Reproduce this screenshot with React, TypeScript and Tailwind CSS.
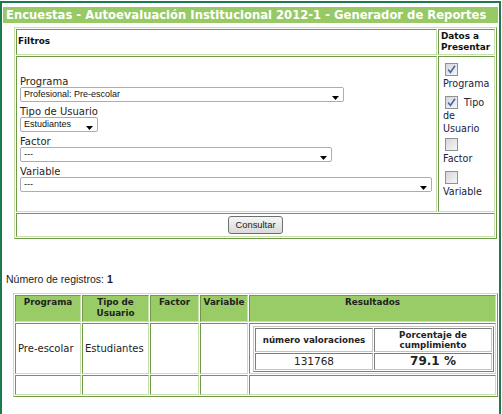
import React from "react";

// --- shared class strings ---
const dv = "font-['DejaVu_Sans',Verdana,sans-serif]";
const ar = "font-['Liberation_Sans',Arial,sans-serif]";
const tableG =
  "border border-t-[#c9dfb1] border-l-[#c9dfb1] border-r-[#6f9a45] border-b-[#6f9a45]";
const cellG =
  "border border-t-[#6f9a45] border-l-[#6f9a45] border-r-[#c9dfb1] border-b-[#c9dfb1]";
const tableGray =
  "border border-t-[#c4c4c4] border-l-[#c4c4c4] border-r-[#7d7d7d] border-b-[#7d7d7d]";
const cellGray =
  "border border-t-[#7d7d7d] border-l-[#7d7d7d] border-r-[#c4c4c4] border-b-[#c4c4c4]";

// --- fake select box ---
function FakeSelect({ width, text }: { width: string; text: string }) {
  return (
    <div
      className={`relative h-[15px] ${width} border border-[#a9aeb3] rounded-[2px] bg-white pl-[3px] ${ar} text-[9px] leading-[13px] text-[#111]`}
    >
      {text}
      <svg
        className="absolute right-[4px] bottom-[1px]"
        width="7"
        height="4"
        viewBox="0 0 7 4"
      >
        <polygon points="0,0 7,0 3.5,4" fill="#000" />
      </svg>
    </div>
  );
}

// --- fake checkbox ---
function Check({ on }: { on?: boolean }) {
  return (
    <div className="w-[13px] h-[13px] shrink-0 border border-[#8f9194] bg-linear-to-br from-[#d6d7d9] to-[#f5f6f7] flex items-center justify-center">
      {on && (
        <svg width="11" height="11" viewBox="0 0 11 11">
          <path
            d="M2.2 5.6 L4.4 8.4 L9 1.8"
            fill="none"
            stroke="#4a64a8"
            strokeWidth="1.6"
          />
        </svg>
      )}
    </div>
  );
}

export default function App() {
  return (
    <div className="w-[502px] h-[414px] overflow-hidden bg-white">
      <div className="mt-px w-[501px] h-[440px] border-2 border-[#1b7a4e] px-px pt-[4px]">
        {/* title bar */}
        <div
          className={`h-[16px] bg-[#97c965] pl-[3px] ${dv} font-bold text-[11.6px] leading-[16px] text-white whitespace-nowrap`}
        >
          Encuestas - Autoevaluación Institucional 2012-1 - Generador de Reportes
        </div>

        {/* filter form */}
        <table
          className={`mt-[4px] ml-[11px] w-[483px] table-fixed border-separate border-spacing-[1px] ${tableG}`}
        >
          <tbody>
            <tr>
              <td
                className={`w-[421px] h-[26px] ${cellG} pl-[1px] align-middle ${dv} font-bold text-[8.9px] text-[#111]`}
              >
                Filtros
              </td>
              <td
                className={`w-[57px] h-[26px] ${cellG} pl-[2px] align-middle ${dv} font-bold text-[8.9px] leading-[11.5px] text-[#111]`}
              >
                Datos a Presentar
              </td>
            </tr>
            <tr>
              <td
                className={`h-[156px] ${cellG} align-top pl-[3px] pt-[19px] ${dv} text-[10px] text-[#2a2320]`}
              >
                <div className="leading-[11px]">Programa</div>
                <FakeSelect width="w-[324px]" text="Profesional: Pre-escolar" />
                <div className="mt-[4px] leading-[11px]">Tipo de Usuario</div>
                <FakeSelect width="w-[78px]" text="Estudiantes" />
                <div className="mt-[4px] leading-[11px]">Factor</div>
                <FakeSelect width="w-[312px]" text="---" />
                <div className="mt-[4px] leading-[11px]">Variable</div>
                <FakeSelect width="w-[412px]" text="---" />
              </td>
              <td
                className={`${cellG} align-top pl-[4px] pt-[6px] ${dv} text-[9.6px] leading-[13px] text-[#22223a]`}
              >
                <div className="ml-[2px] mb-px">
                  <Check on />
                </div>
                <div>Programa</div>
                <div className="mt-[6px] flex">
                  <div className="ml-[2px]">
                    <Check on />
                  </div>
                  <span className="ml-[6px]">Tipo</span>
                </div>
                <div>de</div>
                <div>Usuario</div>
                <div className="mt-[3px] ml-[2px] mb-px">
                  <Check />
                </div>
                <div>Factor</div>
                <div className="mt-[6px] ml-[2px] mb-px">
                  <Check />
                </div>
                <div>Variable</div>
              </td>
            </tr>
            <tr>
              <td colSpan={2} className={`h-[24px] ${cellG} align-middle`}>
                <div className="flex justify-center">
                  <button
                    className={`w-[55px] h-[18px] border border-[#707070] rounded-[3px] bg-linear-to-b from-[#f6f6f6] to-[#d9d9d9] ${ar} text-[9.4px] leading-[16px] text-[#1a1a1a]`}
                  >
                    Consultar
                  </button>
                </div>
              </td>
            </tr>
          </tbody>
        </table>

        {/* results */}
        <div
          className={`mt-[34px] pl-[3px] ${ar} text-[10.5px] leading-[12px] text-[#222]`}
        >
          Número de registros: <b>1</b>
        </div>

        <table
          className={`mt-[8px] ml-[10px] w-[485px] table-fixed border-separate border-spacing-[1px] ${tableG} ${dv} text-[#222]`}
        >
          <tbody>
            <tr>
              <td
                className={`w-[66px] h-[27px] ${cellG} bg-[#99cc66] align-top pt-[1px] text-center font-bold text-[8.8px] leading-[11px]`}
              >
                Programa
              </td>
              <td
                className={`w-[67px] h-[27px] ${cellG} bg-[#99cc66] align-top pt-[1px] text-center font-bold text-[8.8px] leading-[11px]`}
              >
                Tipo de Usuario
              </td>
              <td
                className={`w-[49px] h-[27px] ${cellG} bg-[#99cc66] align-top pt-[1px] text-center font-bold text-[8.8px] leading-[11px]`}
              >
                Factor
              </td>
              <td
                className={`w-[48px] h-[27px] ${cellG} bg-[#99cc66] align-top pt-[1px] text-center font-bold text-[8.8px] leading-[11px]`}
              >
                Variable
              </td>
              <td
                className={`w-[247px] h-[27px] ${cellG} bg-[#99cc66] align-top pt-[1px] text-center font-bold text-[8.8px] leading-[11px]`}
              >
                Resultados
              </td>
            </tr>
            <tr>
              <td className={`h-[51px] ${cellG} align-middle pl-[2px] text-[10px] leading-[12px]`}>
                Pre-escolar
              </td>
              <td className={`h-[51px] ${cellG} align-middle pl-[2px] text-[10px] leading-[12px]`}>
                Estudiantes
              </td>
              <td className={`h-[51px] ${cellG}`}></td>
              <td className={`h-[51px] ${cellG}`}></td>
              <td className={`h-[51px] ${cellG} align-middle`}>
                <table
                  className={`ml-[3px] w-[241px] table-fixed border-separate border-spacing-[1px] ${tableGray}`}
                >
                  <tbody>
                    <tr>
                      <td
                        className={`w-[118px] h-[24px] ${cellGray} align-middle text-center font-bold text-[8.7px] leading-[10px]`}
                      >
                        número valoraciones
                      </td>
                      <td
                        className={`w-[118px] h-[24px] ${cellGray} align-middle text-center font-bold text-[8.7px] leading-[10px]`}
                      >
                        Porcentaje de cumplimiento
                      </td>
                    </tr>
                    <tr>
                      <td
                        className={`h-[17px] ${cellGray} align-middle text-center text-[10.5px] leading-[12px]`}
                      >
                        131768
                      </td>
                      <td
                        className={`h-[17px] ${cellGray} align-middle text-center font-bold text-[12px] leading-[14px]`}
                      >
                        79.1 %
                      </td>
                    </tr>
                  </tbody>
                </table>
              </td>
            </tr>
            <tr>
              <td className={`h-[20px] ${cellG}`}></td>
              <td className={`h-[20px] ${cellG}`}></td>
              <td className={`h-[20px] ${cellG}`}></td>
              <td className={`h-[20px] ${cellG}`}></td>
              <td className={`h-[20px] ${cellG}`}></td>
            </tr>
          </tbody>
        </table>
      </div>
    </div>
  );
}
